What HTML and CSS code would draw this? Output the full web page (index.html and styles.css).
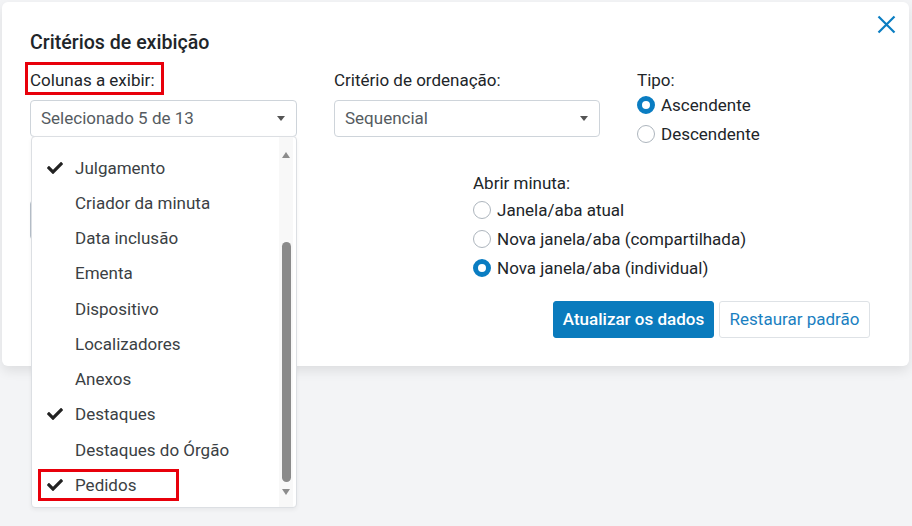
FILE: index.html
```html
<!DOCTYPE html>
<html lang="pt">
<head>
<meta charset="utf-8">
<title>Critérios de exibição</title>
<link rel="stylesheet" href="styles.css">
</head>
<body>
<div class="modal">
  <button class="close" aria-label="Fechar">
    <svg width="19" height="19" viewBox="0 0 19 19"><path d="M1.5 1.5L17.5 17.5M17.5 1.5L1.5 17.5" stroke="#0a7dc2" stroke-width="2.2" fill="none"/></svg>
  </button>
  <h2 class="title">Critérios de exibição</h2>

  <div class="row1">
    <div class="col">
      <span class="lbl mark">Colunas a exibir:</span>
      <div class="selwrap">
        <div class="select"><span>Selecionado 5 de 13</span><i class="caret"></i></div>
        <div class="dropdown">
          <ul class="items">
            <li><span class="chk"><svg viewBox="0 0 512 512"><path d="M173.9 439.4l-166.4-166.4c-10-10-10-26.2 0-36.2l36.2-36.2c10-10 26.2-10 36.2 0L192 312.7 432.1 72.6c10-10 26.2-10 36.2 0l36.2 36.2c10 10 10 26.2 0 36.2l-294.4 294.4c-10 10-26.2 10-36.2 0z"/></svg></span>Julgamento</li>
            <li><span class="chk"></span>Criador da minuta</li>
            <li><span class="chk"></span>Data inclusão</li>
            <li><span class="chk"></span>Ementa</li>
            <li><span class="chk"></span>Dispositivo</li>
            <li><span class="chk"></span>Localizadores</li>
            <li><span class="chk"></span>Anexos</li>
            <li><span class="chk"><svg viewBox="0 0 512 512"><path d="M173.9 439.4l-166.4-166.4c-10-10-10-26.2 0-36.2l36.2-36.2c10-10 26.2-10 36.2 0L192 312.7 432.1 72.6c10-10 26.2-10 36.2 0l36.2 36.2c10 10 10 26.2 0 36.2l-294.4 294.4c-10 10-26.2 10-36.2 0z"/></svg></span>Destaques</li>
            <li><span class="chk"></span>Destaques do Órgão</li>
            <li><span class="marked"><span class="chk"><svg viewBox="0 0 512 512"><path d="M173.9 439.4l-166.4-166.4c-10-10-10-26.2 0-36.2l36.2-36.2c10-10 26.2-10 36.2 0L192 312.7 432.1 72.6c10-10 26.2-10 36.2 0l36.2 36.2c10 10 10 26.2 0 36.2l-294.4 294.4c-10 10-26.2 10-36.2 0z"/></svg></span>Pedidos</span></li>
          </ul>
          <div class="scrollbar">
            <i class="arr up"></i>
            <div class="track"><div class="thumb"></div></div>
            <i class="arr down"></i>
          </div>
        </div>
      </div>
    </div>
    <div class="col">
      <span class="lbl">Critério de ordenação:</span>
      <div class="select"><span>Sequencial</span><i class="caret"></i></div>
    </div>
    <div class="col">
      <span class="lbl">Tipo:</span>
      <div class="radios tight">
        <label class="radio"><span class="dot on"></span>Ascendente</label>
        <label class="radio"><span class="dot"></span>Descendente</label>
      </div>
    </div>
  </div>

  <div class="row2">
    <div class="hidden-input"></div>
    <div class="group">
      <div class="glabel">Abrir minuta:</div>
      <div class="radios">
        <label class="radio"><span class="dot"></span>Janela/aba atual</label>
        <label class="radio"><span class="dot"></span>Nova janela/aba (compartilhada)</label>
        <label class="radio"><span class="dot on"></span>Nova janela/aba (individual)</label>
      </div>
    </div>
  </div>

  <div class="actions">
    <button class="btn primary">Atualizar os dados</button>
    <button class="btn outline">Restaurar padrão</button>
  </div>
</div>
</body>
</html>
```
FILE: styles.css
```css
* { box-sizing: border-box; }
html, body { margin: 0; padding: 0; }
body {
  background: #f3f4f6;
  font-family: Roboto, "Liberation Sans", sans-serif;
  color: #212529;
  width: 912px;
  height: 526px;
  overflow: hidden;
}
.modal {
  position: relative;
  margin: 2px 3px 0 2px;
  width: 907px;
  height: 364px;
  background: #fff;
  border-radius: 6px;
  box-shadow: 0 5px 12px rgba(0,0,0,0.09);
  padding: 30px 39px 0 28px;
}
.close {
  position: absolute;
  top: 13px;
  right: 13px;
  width: 19px;
  height: 19px;
  padding: 0;
  border: 0;
  background: none;
}
.close svg { display: block; }
.title {
  margin: 0;
  font-size: 19.6px;
  line-height: 22px;
  font-weight: 500;
  color: #212529;
}
.row1 {
  margin-top: 7.5px;
  display: grid;
  grid-template-columns: 267px 266px 1fr;
  column-gap: 37px;
  height: 87px;
}
.col { display: flex; flex-direction: column; align-items: flex-start; }
.lbl {
  display: inline-block;
  border: 3px solid transparent;
  padding: 3px 6px 0 2px;
  margin-left: -5px;
  font-size: 17px;
  line-height: 24px;
  height: 33px;
}
.lbl.mark { border-color: #e8000b; }
.selwrap { position: relative; width: 100%; }
.select {
  margin-top: 5px;
  width: 100%;
  height: 37px;
  border: 1px solid #ced4da;
  border-radius: 4px;
  display: flex;
  align-items: center;
  justify-content: space-between;
  padding: 0 11px 0 10px;
  font-size: 17px;
  color: #555b61;
}
.caret {
  width: 0; height: 0;
  border-left: 4px solid transparent;
  border-right: 4px solid transparent;
  border-top: 5px solid #555;
}
.dropdown {
  position: absolute;
  top: 41px;
  left: 1px;
  width: 266px;
  height: 372px;
  background: #fff;
  border: 1px solid #dcdfe3;
  border-radius: 4px;
  box-shadow: 0 2px 4px rgba(0,0,0,0.05);
  z-index: 5;
  display: flex;
}
.items {
  list-style: none;
  margin: 0;
  padding: 13.5px 0 0 14px;
  flex: 1;
}
.items li {
  height: 35.25px;
  display: flex;
  align-items: center;
  font-size: 17px;
  color: #3b3f44;
}
.chk {
  width: 29px;
  flex: none;
  display: flex;
  align-items: center;
}
.chk svg { width: 18px; height: 16px; fill: #222; }
.marked {
  display: flex;
  align-items: center;
  border: 3px solid #e8000b;
  height: 32px;
  width: 141px;
  margin-left: -8px;
  padding-left: 5px;
}
.scrollbar {
  width: 14px;
  margin-right: 3px;
  background: #f8f8f8;
  display: flex;
  flex-direction: column;
  align-items: center;
  padding: 15px 0 12px;
}
.arr {
  width: 0; height: 0;
  border-left: 4.5px solid transparent;
  border-right: 4.5px solid transparent;
}
.arr.up { border-bottom: 6px solid #8c8c8c; }
.arr.down { border-top: 6px solid #8c8c8c; }
.track { flex: 1; width: 100%; display: flex; flex-direction: column; justify-content: flex-end; padding: 0 0 7px; }
.thumb {
  width: 9px;
  margin: 0 auto;
  height: 240px;
  background: #8a8a8a;
  border-radius: 5px;
}
.radios { display: flex; flex-direction: column; }
.radios.tight { margin-top: -4px; }
.radio {
  display: flex;
  align-items: center;
  height: 29px;
  font-size: 17px;
  color: #212529;
}
.dot {
  width: 18px;
  height: 18px;
  border-radius: 50%;
  border: 1px solid #adb5bd;
  background: #fff;
  margin-right: 6px;
  flex: none;
}
.dot.on {
  border: 5px solid #0a7dc2;
  background: #fff;
}
.row2 {
  display: flex;
  margin-top: 22.5px;
}
.hidden-input {
  width: 267px;
  height: 40px;
  margin-top: 29px;
  border: 1px solid #b7c0ca;
  border-radius: 4px;
}
.group { margin-left: 176px; margin-top: 0; }
.glabel { font-size: 17px; line-height: 24px; }
.actions {
  display: flex;
  justify-content: flex-end;
  gap: 5px;
  margin-top: 18.5px;
}
.btn {
  height: 37px;
  font-family: Roboto, "Liberation Sans", sans-serif;
  font-size: 17px;
  border-radius: 3px;
  padding: 0 8px;
}
.btn.primary {
  width: 161px;
  background: #0a7bbd;
  border: 1px solid #0a7bbd;
  color: #fff;
  font-weight: 500;
}
.btn.outline {
  width: 151px;
  background: #fff;
  border: 1px solid #dee2e6;
  color: #1a7fc1;
}
```
